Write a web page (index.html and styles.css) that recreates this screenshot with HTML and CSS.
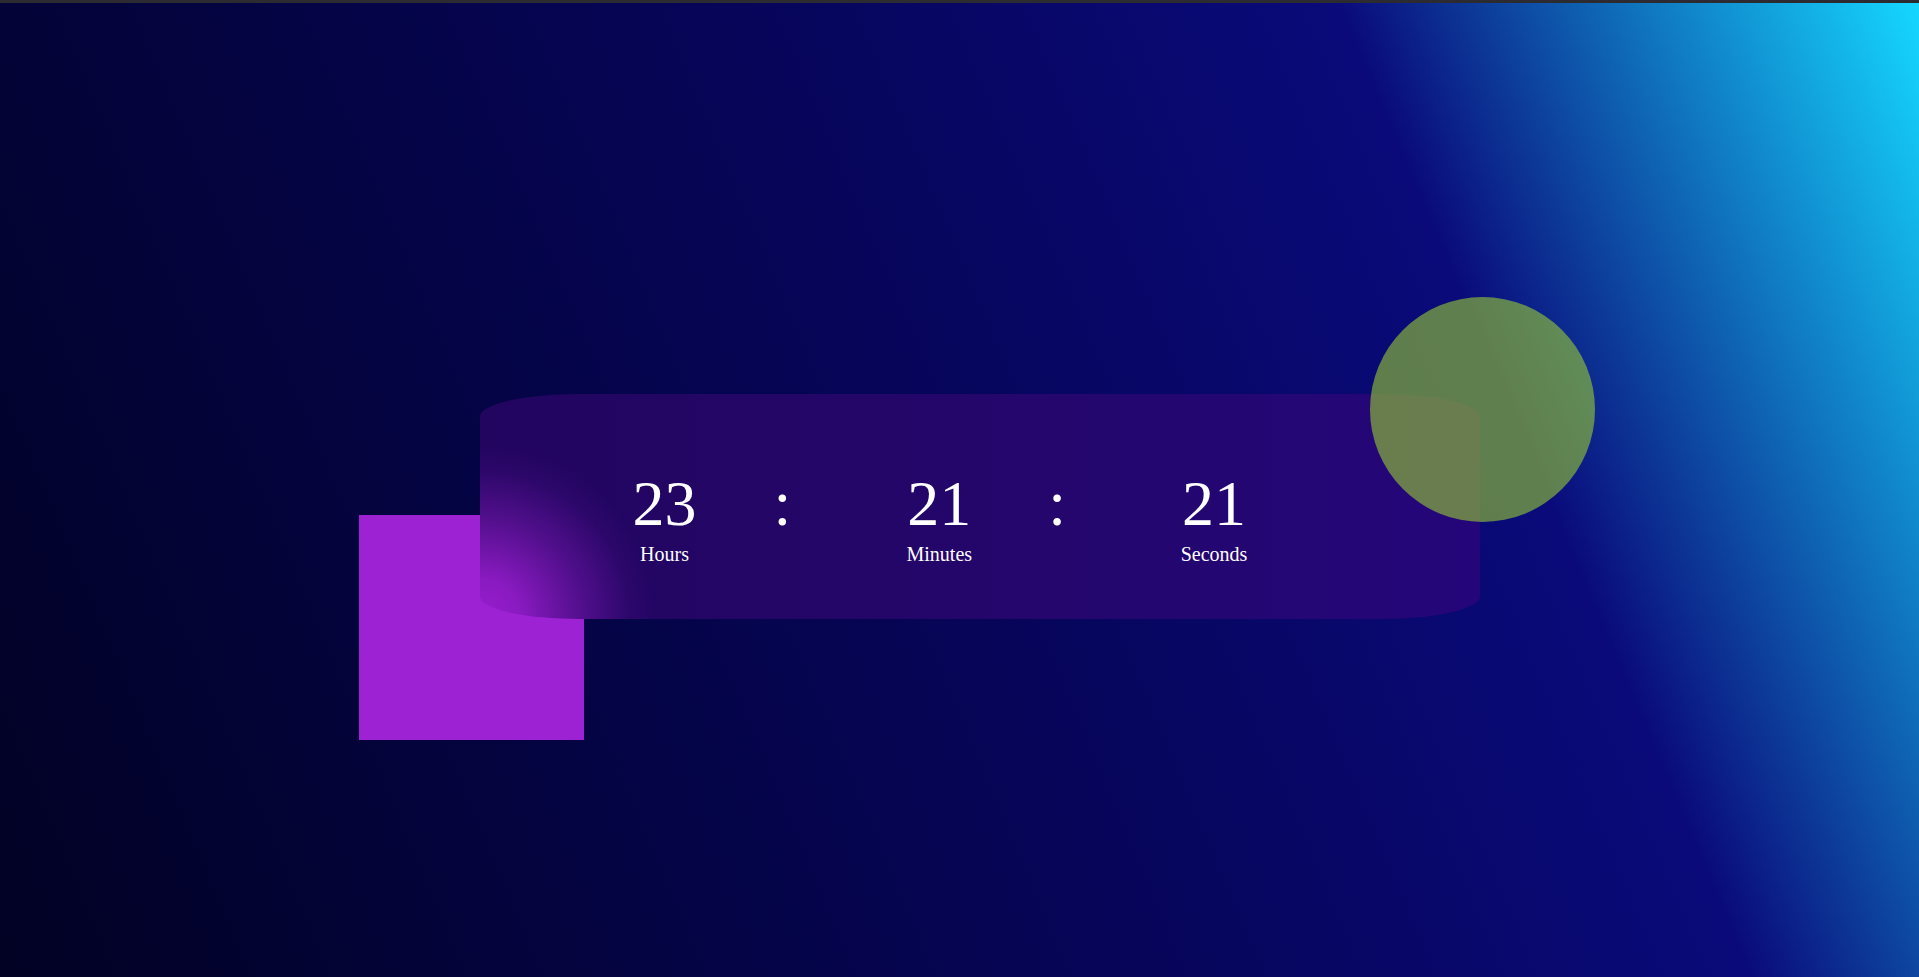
FILE: index.html
```html
<!DOCTYPE html>
<html lang="en">
<head>
<meta charset="utf-8">
<title>Countdown</title>
<link rel="stylesheet" href="styles.css">
</head>
<body>
<div class="topbar"></div>
<main class="stage">
  <div class="timer">
    <div class="square"></div>
    <section class="card">
      <div class="unit"><span class="num">23</span><span class="label">Hours</span></div>
      <span class="colon">:</span>
      <div class="unit"><span class="num">21</span><span class="label">Minutes</span></div>
      <span class="colon">:</span>
      <div class="unit"><span class="num">21</span><span class="label">Seconds</span></div>
    </section>
    <div class="circle"></div>
  </div>
</main>
</body>
</html>
```
FILE: styles.css
```css
html, body {
  margin: 0;
  padding: 0;
  height: 100%;
}
body {
  min-height: 100vh;
  overflow: hidden;
  font-family: "Liberation Serif", "Times New Roman", serif;
  color: #ffffff;
  background: linear-gradient(67deg, #020224 0%, #06055a 50%, #0a0a7a 75%, #15d8ff 100%);
}
.topbar {
  height: 3px;
  background: #2c2b32;
}
.stage {
  padding: 391px 0 0 480px;
}
.timer {
  position: relative;
  width: 1000px;
  height: 225px;
}
.square {
  position: absolute;
  left: -121px;
  top: 121px;
  width: 225px;
  height: 225px;
  background: #9d22d4;
}
.circle {
  position: absolute;
  left: 890px;
  top: -97px;
  width: 225px;
  height: 225px;
  border-radius: 50%;
  background: yellowgreen;
  opacity: 0.6;
  z-index: 2;
}
.card {
  position: relative;
  z-index: 1;
  box-sizing: border-box;
  width: 1000px;
  height: 225px;
  border-radius: 10%;
  background:
    radial-gradient(circle at 0 100%, rgba(156, 30, 210, 0.97) 0, rgba(156, 30, 210, 0.85) 40px, rgba(156, 30, 210, 0.4) 100px, rgba(156, 30, 210, 0.08) 150px, rgba(156, 30, 210, 0) 175px),
    linear-gradient(90deg, #22055f 0%, #24066b 50%, #24067a 100%);
  display: flex;
  align-items: flex-start;
  padding: 78px 0 0 124.5px;
}
.unit {
  width: 120px;
  display: flex;
  flex-direction: column;
  align-items: center;
}
.num {
  font-size: 64px;
  line-height: 1;
}
.label {
  font-size: 20px;
  line-height: 1;
  margin-top: 8px;
}
.colon {
  font-size: 64px;
  line-height: 1;
  margin: 0 88px 0 49px;
}
```
